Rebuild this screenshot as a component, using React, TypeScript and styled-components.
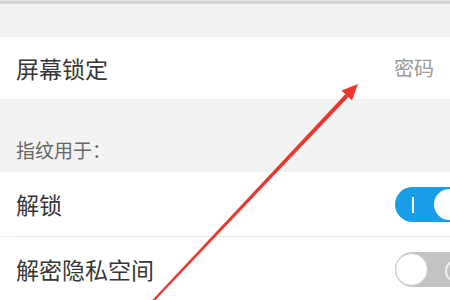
import React from "react";
import styled, { createGlobalStyle } from "styled-components";

const GlobalStyle = createGlobalStyle`
  html, body {
    margin: 0;
    padding: 0;
    background: #f3f3f3;
    overflow: hidden;
  }
  body {
    font-family: "Noto Sans CJK SC", "Noto Sans", sans-serif;
  }
`;

const Page = styled.div`
  position: relative;
  width: 450px;
  height: 300px;
  overflow: hidden;
  background: #f3f3f3;
  display: flex;
  flex-direction: column;
`;

const TopEdge = styled.div`
  height: 3px;
  border-top: 1px solid #e6e6e6;
  background: #d6d6d6;
  flex-shrink: 0;
`;

const Spacer = styled.div<{ $h: number }>`
  height: ${(p) => p.$h}px;
  flex-shrink: 0;
`;

const Row = styled.div<{ $h: number }>`
  height: ${(p) => p.$h}px;
  flex-shrink: 0;
  background: #fff;
  display: flex;
  align-items: center;
  justify-content: space-between;
  padding-left: 16px;
  padding-right: 16px;
  box-sizing: border-box;
  overflow: visible;
`;

const Label = styled.span`
  font-size: 23px;
  color: #363636;
  line-height: 1;
`;

const Value = styled.span`
  font-size: 20px;
  color: #9a9a9a;
  line-height: 1;
`;

const SectionHeader = styled.div`
  height: 73px;
  flex-shrink: 0;
  display: flex;
  align-items: flex-end;
  padding: 0 0 13px 16px;
  box-sizing: border-box;
  font-size: 19px;
  color: #666;
  line-height: 1;
`;

const Divider = styled.div`
  height: 1px;
  margin-left: 16px;
  background: #e8e8e8;
  flex-shrink: 0;
`;

const Track = styled.div<{ $on: boolean }>`
  position: relative;
  flex-shrink: 0;
  width: 72px;
  height: 35px;
  margin-right: -33px;
  border-radius: 18px;
  background: ${(p) => (p.$on ? "#1a9de9" : "#c3c3c3")};
  display: flex;
  align-items: center;
  justify-content: ${(p) => (p.$on ? "flex-end" : "flex-start")};
  padding: 0 2px;
  box-sizing: border-box;
`;

const Thumb = styled.div<{ $on: boolean }>`
  width: ${(p) => (p.$on ? 31 : 33)}px;
  height: ${(p) => (p.$on ? 31 : 33)}px;
  border-radius: 50%;
  background: #fff;
  box-sizing: border-box;
  border: ${(p) => (p.$on ? "none" : "1.5px solid #cbcbcb")};
  margin-left: ${(p) => (p.$on ? 0 : -2)}px;
`;

const OnMark = styled.div`
  position: absolute;
  left: 17px;
  top: 10px;
  width: 2px;
  height: 16px;
  background: #fff;
`;

const OffMark = styled.div`
  position: absolute;
  left: 50px;
  top: 9px;
  width: 12px;
  height: 16px;
  border-radius: 50%;
  border: 2px solid #f2f2f2;
`;

const Overlay = styled.svg`
  position: absolute;
  left: 0;
  top: 0;
  pointer-events: none;
`;

function Toggle({ on }: { on: boolean }) {
  return (
    <Track $on={on}>
      {on ? <OnMark /> : <OffMark />}
      <Thumb $on={on} />
    </Track>
  );
}

export default function App() {
  return (
    <>
      <GlobalStyle />
      <Page>
        <TopEdge />
        <Spacer $h={33} />
        <Row $h={62}>
          <Label>屏幕锁定</Label>
          <Value>密码</Value>
        </Row>
        <SectionHeader>指纹用于：</SectionHeader>
        <Row $h={64}>
          <Label>解锁</Label>
          <Toggle on />
        </Row>
        <Divider />
        <Row $h={64}>
          <Label>解密隐私空间</Label>
          <Toggle on={false} />
        </Row>
        <Overlay width="450" height="300" viewBox="0 0 450 300">
          <polygon points="150.5,302 153.5,302 348.5,97 345.5,94" fill="#e8392f" />
          <polygon points="358,84 352,100.5 341.5,90.5" fill="#e8392f" />
        </Overlay>
      </Page>
    </>
  );
}
